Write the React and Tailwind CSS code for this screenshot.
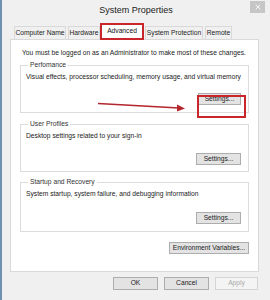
import { X } from 'lucide-react';

const font = { fontFamily: '"Liberation Sans", Arial, sans-serif' };

const Btn = ({ children, className = '', disabled = false }) => (
    <div
        className={`h-[12px] flex items-center justify-center border text-[6.7px] leading-none ${
            disabled ? 'border-[#d4d4d4] bg-[#f4f4f4] text-[#a8a8a8]' : 'border-[#adadad] bg-[#e3e3e3] text-[#222]'
        } ${className}`}
    >
        {children}
    </div>
);

const Group = ({ title, text, children, className = '', btnTop = 'mt-[12px]' }) => (
    <fieldset className={`relative mx-[9px] border border-[#dcdcdc] pl-[5px] pr-[7px] ${className}`}>
        <legend className="ml-[2px] px-[2px] text-[6.7px] leading-[8px] text-[#333]">{title}</legend>
        <div className="text-[6.7px] leading-[9px] text-[#222] mt-[3px] whitespace-nowrap">{text}</div>
        <div className={`flex justify-end ${btnTop}`}>{children}</div>
    </fieldset>
);

const tabs = [
    { name: 'Computer Name', w: 'w-[52px]', gap: 'mr-[2px]' },
    { name: 'Hardware', w: 'w-[32px]', gap: 'mr-0' },
    { name: 'Advanced', w: 'w-[44px]', gap: 'mr-[1px]' },
    { name: 'System Protection', w: 'w-[58px]', gap: 'mr-[2px]' },
    { name: 'Remote', w: 'w-[27px]', gap: 'mr-0' },
];

export default function App() {
    return (
        <div className="w-[270px] h-[300px] bg-[#f0f0f0] border-l-2 border-[#7090b0] flex flex-col overflow-hidden" style={font}>
            {/* title bar */}
            <div className="h-[22px] flex items-start relative">
                <div className="flex-1 text-center text-[9px] leading-[18px] text-[#222] pt-[1px]">System Properties</div>
                <div className="absolute right-[5px] top-[1px] w-[15px] h-[12px] bg-[#c6c6c6] flex items-center justify-center">
                    <X size={8} color="#fff" strokeWidth={2.5} />
                </div>
            </div>

            {/* tabs */}
            <div className="flex items-end ml-[12px] h-[17px] relative z-10">
                {tabs.map(t => (
                    <div
                        key={t.name}
                        className={`${t.w} ${t.gap} text-[6.7px] leading-none flex items-center justify-center whitespace-nowrap ${
                            t.name === 'Advanced'
                                ? 'h-[17px] border-2 border-[#c8262b] bg-white text-[#111] -mb-[1px]'
                                : 'h-[13px] border border-b-0 border-[#d9d9d9] bg-[#f0f0f0] text-[#222]'
                        }`}
                    >
                        {t.name}
                    </div>
                ))}
            </div>

            {/* tab panel */}
            <div className="ml-[8px] w-[249px] h-[233px] bg-white border border-[#d9d9d9] flex flex-col">
                <div className="text-[6.7px] leading-[9px] text-[#222] mt-[8px] ml-[11px] whitespace-nowrap">
                    You must be logged on as an Administrator to make most of these changes.
                </div>

                <Group title="Perfomance" text="Visual effects, processor scheduling, memory usage, and virtual memory" className="mt-[4px] h-[52px]">
                    <Btn className="w-[43px]">Settings...</Btn>
                    {/* red annotation */}
                    <div className="absolute left-[176px] top-[26px] w-[49px] h-[23px] border-2 border-[#c8262b]" />
                    <svg className="absolute left-[72px] top-[32px]" width="100" height="12" viewBox="0 0 100 12">
                        <line x1="5" y1="2.5" x2="86" y2="7" stroke="#b3262b" strokeWidth="1.6" />
                        <polygon points="92,7.5 84,3.5 84,10.5" fill="#b3262b" />
                    </svg>
                </Group>

                <Group title="User Profiles" text="Desktop settings related to your sign-in" className="mt-[7px] h-[52px]" btnTop="mt-[13px]">
                    <Btn className="w-[45px]">Settings...</Btn>
                </Group>

                <Group title="Startup and Recovery" text="System startup, system failure, and debugging information" className="mt-[6px] h-[54px]" btnTop="mt-[14px]">
                    <Btn className="w-[45px]">Settings...</Btn>
                </Group>

                <div className="flex justify-end mr-[9px] mt-[10px]">
                    <Btn className="w-[80px]">Environment Variables...</Btn>
                </div>
            </div>

            {/* dialog buttons */}
            <div className="flex justify-end gap-[6px] mr-[12px] mt-[5px]">
                <Btn className="w-[45px] h-[13px]">OK</Btn>
                <Btn className="w-[45px] h-[13px]">Cancel</Btn>
                <Btn className="w-[43px] h-[13px]" disabled>Apply</Btn>
            </div>
        </div>
    );
}
